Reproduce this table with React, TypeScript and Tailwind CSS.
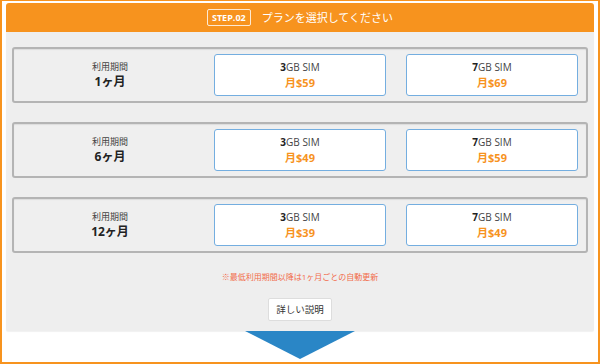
import * as React from "react"

interface PlanRow {
    term: string
    prices: { gb: string; price: string }[]
}

const rows: PlanRow[] = [
    { term: "1ヶ月", prices: [{ gb: "3", price: "$59" }, { gb: "7", price: "$69" }] },
    { term: "6ヶ月", prices: [{ gb: "3", price: "$49" }, { gb: "7", price: "$59" }] },
    { term: "12ヶ月", prices: [{ gb: "3", price: "$39" }, { gb: "7", price: "$49" }] },
]

const font = { fontFamily: '"Open Sans", "Noto Sans CJK JP", sans-serif' }

function PlanCard({ gb, price }: { gb: string; price: string }) {
    return (
        <button className="flex h-[42px] w-[172px] flex-col items-center justify-center rounded-[3px] border border-[#74aee0] bg-white leading-none">
            <span className="text-[10px] text-[#444]">
                <b className="text-[#222]">{gb}</b>GB SIM
            </span>
            <span className="mt-[5px] text-[11px] font-bold text-[#f7931e]">月{price}</span>
        </button>
    )
}

export default function App() {
    return (
        <div style={font} className="flex h-[364px] w-[600px] flex-col border-t border-b-2 border-l-2 border-r-2 border-[#f7931e] bg-white px-1 pt-[2px]">
            {/* ── Step header ── */}
            <div className="flex h-[29px] shrink-0 items-center justify-center gap-[11px] rounded-t-[3px] bg-[#f7931e]">
                <span className="flex h-[17px] items-center rounded-[2px] border border-white/80 px-[4px] text-[9px] font-bold leading-none text-white">
                    STEP.02
                </span>
                <span className="text-[11px] leading-none text-white">プランを選択してください</span>
            </div>

            {/* ── Plan list ── */}
            <div className="flex shrink-0 flex-col rounded-b-[2px] bg-[#eeeeee] px-[6px] pt-[15px] pb-[10px] shadow-[0_1px_1px_rgba(0,0,0,0.06)]">
                <div className="flex flex-col gap-[19px]">
                    {rows.map(r => (
                        <div
                            key={r.term}
                            className="flex h-[56px] items-center rounded-[3px] border-2 border-[#b4b4b4] bg-[#efefef] shadow-[inset_0_1px_1px_rgba(0,0,0,0.08)]"
                        >
                            <div className="flex w-[200px] flex-col items-center pr-[8px]">
                                <span className="text-[9px] leading-[13px] text-[#444]">利用期間</span>
                                <span className="text-[12px] font-bold leading-[17px] text-[#222]">{r.term}</span>
                            </div>
                            <div className="flex gap-[20px]">
                                {r.prices.map(p => (
                                    <PlanCard key={p.gb} gb={p.gb} price={p.price} />
                                ))}
                            </div>
                        </div>
                    ))}
                </div>

                <p className="mt-[20px] text-center text-[8px] leading-none text-[#f26b4a]">
                    ※最低利用期間以降は1ヶ月ごとの自動更新
                </p>

                <div className="mt-[17px] flex justify-center">
                    <button className="h-[23px] rounded-[2px] border border-[#dddddd] bg-white px-[7px] text-[9.5px] leading-none text-[#333]">
                        詳しい説明
                    </button>
                </div>
            </div>

            {/* down arrow */}
            <div className="flex shrink-0 justify-center">
                <div className="h-0 w-0 border-l-[55px] border-r-[55px] border-t-[28px] border-l-transparent border-r-transparent border-t-[#2a86c6]" />
            </div>
        </div>
    )
}
